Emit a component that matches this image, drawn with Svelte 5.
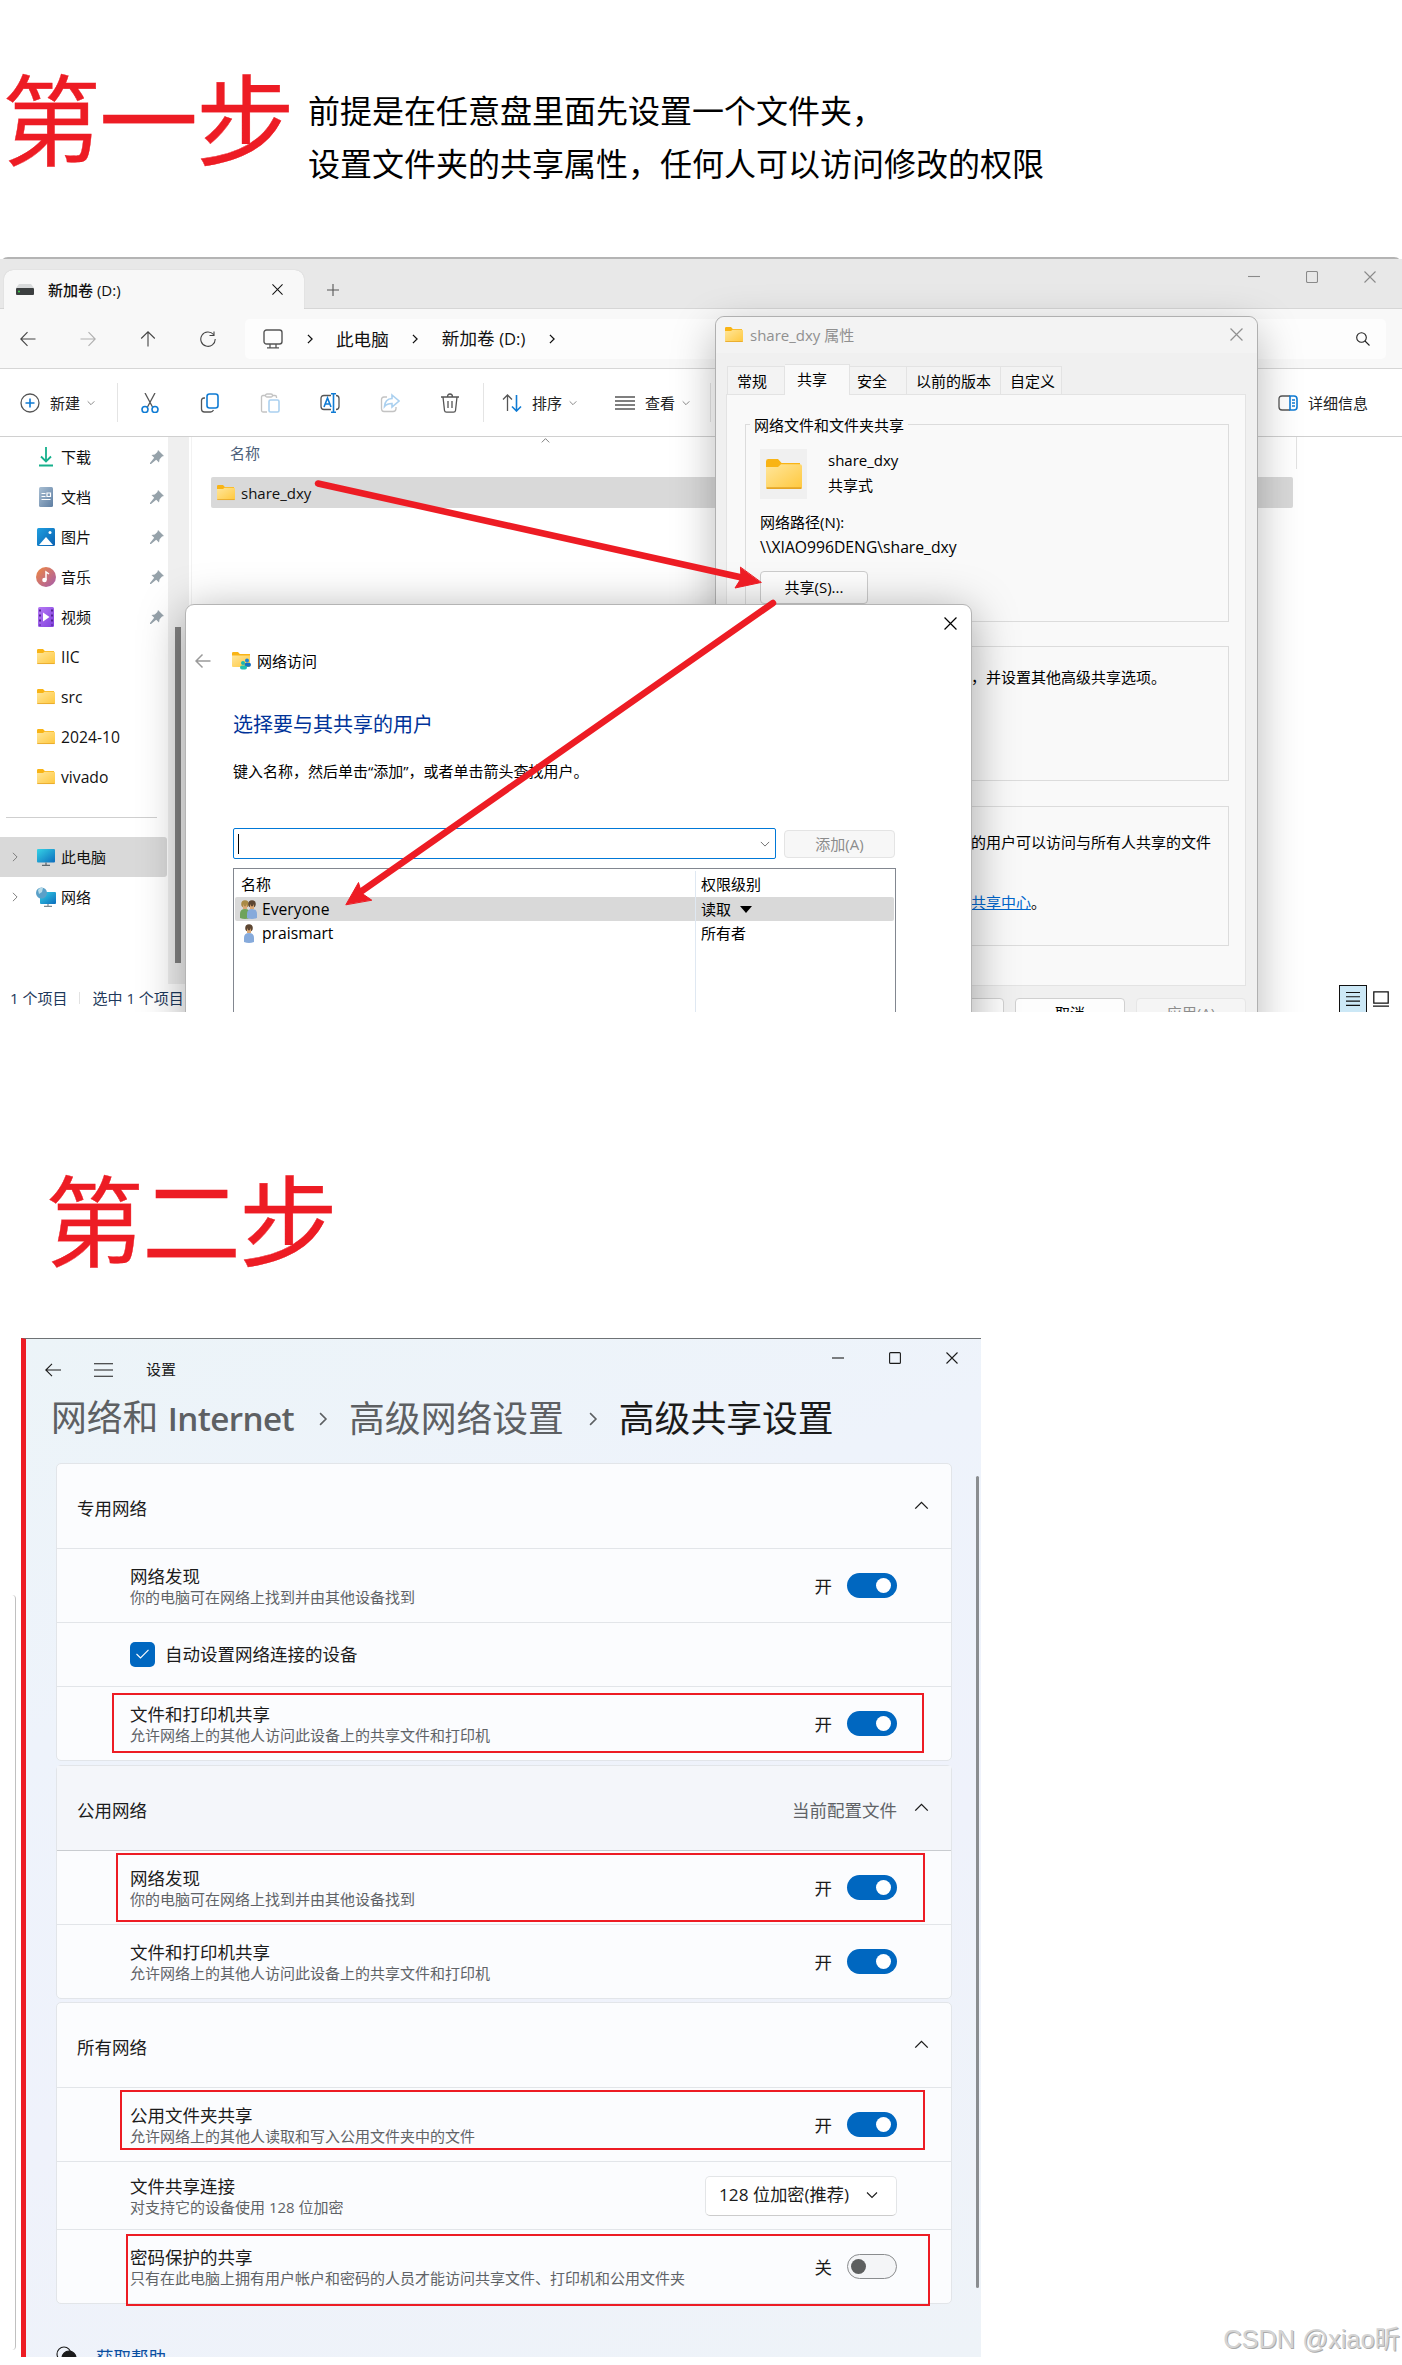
<script lang="ts">
  const quickAccess = [
    { icon: 'download', label: '下载', pinned: true },
    { icon: 'doc', label: '文档', pinned: true },
    { icon: 'picture', label: '图片', pinned: true },
    { icon: 'music', label: '音乐', pinned: true },
    { icon: 'video', label: '视频', pinned: true },
    { icon: 'folder', label: 'IIC', pinned: false },
    { icon: 'folder', label: 'src', pinned: false },
    { icon: 'folder', label: '2024-10', pinned: false },
    { icon: 'folder', label: 'vivado', pinned: false }
  ];

  const discovery = { title: '网络发现', sub: '你的电脑可在网络上找到并由其他设备找到', kind: 'on' };
  const printing = { title: '文件和打印机共享', sub: '允许网络上的其他人访问此设备上的共享文件和打印机', kind: 'on' };

  const sections = [
    {
      name: '专用网络',
      note: '',
      rows: [discovery, { title: '自动设置网络连接的设备', sub: '', kind: 'check' }, { ...printing, mark: 'm1' }]
    },
    {
      name: '公用网络',
      note: '当前配置文件',
      rows: [{ ...discovery, mark: 'm2' }, printing]
    },
    {
      name: '所有网络',
      note: '',
      rows: [
        { title: '公用文件夹共享', sub: '允许网络上的其他人读取和写入公用文件夹中的文件', kind: 'on', mark: 'm3' },
        { title: '文件共享连接', sub: '对支持它的设备使用 128 位加密', kind: 'select' },
        { title: '密码保护的共享', sub: '只有在此电脑上拥有用户帐户和密码的人员才能访问共享文件、打印机和公用文件夹', kind: 'off', mark: 'm4' }
      ]
    }
  ] as { name: string; note: string; rows: { title: string; sub: string; kind: string; mark?: string }[] }[];
</script>

<svelte:head>
  <title>共享设置</title>
</svelte:head>

{#snippet close(size: number)}
  <svg width={size} height={size} viewBox="0 0 12 12"><path d="M.5.5l11 11M11.5.5l-11 11" /></svg>
{/snippet}

{#snippet chevron(dir: string, w: number)}
  <svg class="chev {dir}" width={w} height={w} viewBox="0 0 12 12"><path d="M1 3.5l5 5 5-5" /></svg>
{/snippet}

{#snippet folder(w: number)}
  <svg class="solid" width={w} height={w * 0.84} viewBox="0 0 18 15">
    <path d="M0 1.2Q0 0 1.2 0H6l1.8 2H17v5H0z" fill="#f9b415" />
    <path d="M0 4h6l1.5-1.4H17q1 0 1 1V14q0 1-1 1H1q-1 0-1-1z" fill="url(#fold)" />
    <path d="M.3 14.5h17.4" stroke="#e5a526" stroke-width=".8" />
  </svg>
{/snippet}

{#snippet icon(name: string)}
  {#if name === 'folder'}
    {@render folder(18)}
  {:else if name === 'download'}
    <svg class="green" width="18" height="20" viewBox="0 0 18 20"><path d="M9 0v14M4 9.5l5 5 5-5M2 18.5h14" /></svg>
  {:else if name === 'doc'}
    <svg class="solid" width="18" height="20" viewBox="0 0 18 20">
      <rect x="2" width="14" height="20" rx="1.5" fill="url(#docg)" />
      <path d="M4.5 6.5h4M4.5 9.5h4M4.5 12.5h9M10 6h3.5v3.5H10z" stroke="#fff" stroke-width="1.2" />
    </svg>
  {:else if name === 'picture'}
    <svg class="solid" width="18" height="18" viewBox="0 0 18 18">
      <rect width="18" height="18" rx="1.5" fill="url(#blue)" />
      <path d="M2 17l7-8 7 8z" fill="#fff" /><circle cx="13" cy="4.5" r="1.5" fill="#fff" />
    </svg>
  {:else if name === 'music'}
    <svg class="solid" width="20" height="20" viewBox="0 0 20 20">
      <circle cx="10" cy="10" r="10" fill="url(#mus)" />
      <circle cx="8.5" cy="13" r="2.3" fill="#fff" /><path d="M10 13V5l3 2" stroke="#fff" stroke-width="1.5" />
    </svg>
  {:else if name === 'video'}
    <svg class="solid" width="18" height="20" viewBox="0 0 18 20">
      <rect x="1" width="16" height="20" rx="1.5" fill="url(#vid)" />
      <path d="M3 2.5v16M15 2.5v16" stroke="#4c1f8a" stroke-width="1.8" stroke-dasharray="2 3" />
      <path d="M6 5.5l6.5 4.5L6 14.5z" fill="#fff" />
    </svg>
  {:else if name === 'pc'}
    <svg class="solid" width="18" height="17" viewBox="0 0 18 17">
      <rect width="18" height="13.5" rx="1" fill="url(#cyan)" />
      <path d="M9 13.5V16M5 16.3h8" stroke="#5d6870" stroke-width="1.3" />
    </svg>
  {:else if name === 'net'}
    <svg class="solid" width="20" height="20" viewBox="0 0 20 20">
      <rect x="4" y="5" width="16" height="12" rx="1" fill="url(#cyan)" />
      <path d="M12 17v2M8 19.3h8" stroke="#7b8991" stroke-width="1.2" />
      <circle cx="5.5" cy="6" r="5.5" fill="#5aa0c8" /><path d="M2 3q2-3 5-2l-1 4-3 2z" fill="#b8dbe8" />
    </svg>
  {/if}
{/snippet}

{#snippet person(x: number, hair: string, body: string)}
  <circle cx={x} cy="5" r="3.8" fill={hair} />
  <path d="M{x - 2} 5q2 5 4 0v5h-4z" fill="#dba875" />
  <path d="M{x - 5} 19v-4q0-5 5-5t5 5v4q-5 2-10 0z" fill={body} />
{/snippet}

<svg class="defs" width="0" height="0">
  <defs>
    <linearGradient id="fold" x2="1" y2="1"><stop stop-color="#ffe69b" /><stop offset="1" stop-color="#ffc83d" /></linearGradient>
    <linearGradient id="docg" x2="1" y2="1"><stop stop-color="#a9bfd3" /><stop offset="1" stop-color="#5e7ea2" /></linearGradient>
    <linearGradient id="blue" x2="1" y2="1"><stop stop-color="#1f9fe0" /><stop offset="1" stop-color="#0a5fb0" /></linearGradient>
    <linearGradient id="mus" x2="1" y2="1"><stop stop-color="#f0883e" /><stop offset="1" stop-color="#a55cae" /></linearGradient>
    <linearGradient id="vid" x2="1" y2="1"><stop stop-color="#b679f5" /><stop offset="1" stop-color="#8040dd" /></linearGradient>
    <linearGradient id="cyan" x2="1" y2="1"><stop stop-color="#35d3e6" /><stop offset="1" stop-color="#0c6cbd" /></linearGradient>
  </defs>
</svg>

<main class="page">
  <header class="step first">
    <h1>第一步</h1>
    <p>前提是在任意盘里面先设置一个文件夹，<br />设置文件夹的共享属性，任何人可以访问修改的权限</p>
  </header>

  <section class="desktop">
    <div class="explorer">
      <div class="titlebar">
        <div class="tab">
          <svg class="solid" width="18" height="11" viewBox="0 0 18 11">
            <path d="M3 0h12l3 4H0z" fill="#d8dadb" /><rect y="4" width="18" height="7" rx="1" fill="#3c3f40" />
            <circle cx="3" cy="7.5" r="1" fill="#3ddc4c" />
          </svg>
          <span>新加卷 (D:)</span>
          {@render close(11)}
        </div>
        <svg class="plus" width="12" height="12" viewBox="0 0 12 12"><path d="M6 0v12M0 6h12" /></svg>
        <div class="controls">
          <svg width="12" height="12" viewBox="0 0 12 12"><path d="M0 5.5h12" /></svg>
          <svg width="12" height="12" viewBox="0 0 12 12"><rect x=".5" y=".5" width="11" height="11" rx="1.3" /></svg>
          {@render close(12)}
        </div>
      </div>

      <div class="navbar">
        <div class="navs">
          <svg width="16" height="16" viewBox="0 0 16 16"><path d="M15.5 8H1M7.5 1.2L.8 8l6.7 6.8" /></svg>
          <svg class="dim" width="16" height="16" viewBox="0 0 16 16"><path d="M.5 8H15M8.5 1.2L15.2 8l-6.7 6.8" /></svg>
          <svg width="16" height="16" viewBox="0 0 16 16"><path d="M8 15.5V1M1.2 7.5L8 .8l6.8 6.7" /></svg>
          <svg width="16" height="16" viewBox="0 0 16 16"><path d="M13.5 3.5A7.2 7.2 0 1 0 15.2 8M14 .5v4H9.5" /></svg>
        </div>
        <div class="address">
          <svg width="20" height="20" viewBox="0 0 20 20"><rect x="1" y="1" width="18" height="14" rx="2.5" stroke-width="1.4" /><path d="M7 15v3.5M13 15v3.5M4 18.8h12" stroke-width="1.3" /></svg>
          <span class="sep">{@render chevron('right', 10)}</span>
          <span>此电脑</span>
          <span class="sep">{@render chevron('right', 10)}</span>
          <span>新加卷 <small>(D:)</small></span>
          <span class="sep">{@render chevron('right', 10)}</span>
          <svg class="search" width="14" height="14" viewBox="0 0 14 14"><circle cx="5.5" cy="5.5" r="4.8" /><path d="M9 9l4.5 4.5" /></svg>
        </div>
      </div>

      <div class="toolbar">
        <div class="tool new">
          <svg width="20" height="20" viewBox="0 0 20 20"><circle cx="10" cy="10" r="9" /><path class="b" d="M10 5.5v9M5.5 10h9" /></svg>
          <span>新建</span>{@render chevron('down', 8)}
        </div>
        <i class="bar"></i>
        <div class="acts">
          <svg width="20" height="20" viewBox="0 0 20 20"><path d="M5 0l7.5 14M15 0L7.5 14" /><circle class="b" cx="5" cy="16.5" r="3" /><circle class="b" cx="15" cy="16.5" r="3" /></svg>
          <svg width="20" height="20" viewBox="0 0 20 20"><path d="M5 5H4Q1.5 5 1.5 7.5v8.500q0 3 3 3h6q2 0 3-2" /><rect class="b" x="7" y="1" width="11" height="14" rx="2.5" /></svg>
          <svg class="faint" width="20" height="20" viewBox="0 0 20 20"><path d="M6 2.5H3q-1.500 0-1.500 1.500v13.500q0 1.500 1.500 1.500h4M12 2.500h3q1.500 0 1.500 1.500v1" /><rect x="5.5" y="1" width="7" height="3" rx="1.5" /><rect class="b" x="9" y="7" width="10" height="12" rx="1.5" /></svg>
          <svg width="20" height="20" viewBox="0 0 20 20"><path d="M11 2.5H4q-3 0-3 3v8q0 3 3 3h7M16 2.5q3 0 3 3v8q0 3-3 3" /><path class="b" d="M4 14l3.500-9L11 14M5 11h5M11 .8h5M11 19.200h5M13.500 1v18" /></svg>
          <svg class="faint" width="20" height="20" viewBox="0 0 20 20"><path d="M7 4H4Q1.500 4 1.500 6.500v9Q1.500 18.500 4 18.500h9q3 0 3-3V14" /><path class="b" d="M12 2l7 6-7 6v-3.500q-5 0-7.500 3Q5 6 12 5.500z" /></svg>
          <svg width="20" height="20" viewBox="0 0 20 20"><path d="M1 4h18M3 4l1.500 13.500q.2 1.700 2 1.700h7q1.800 0 2-1.700L17 4M7.500 4q0-3 2.500-3t2.500 3M8 8v7M12 8v7" /></svg>
        </div>
        <i class="bar"></i>
        <div class="tool sort">
          <svg width="20" height="18" viewBox="0 0 20 18"><path d="M5.500 17V1M1 5.500L5.500 1 10 5.500" /><path class="b" d="M14.500 1v16M10 12.500l4.500 4.500 4.500-4.500" /></svg>
          <span>排序</span>{@render chevron('down', 8)}
        </div>
        <div class="tool view">
          <svg width="20" height="14" viewBox="0 0 20 14"><path d="M0 1h20M0 5h20M0 9h20M0 13h20" /></svg>
          <span>查看</span>{@render chevron('down', 8)}
        </div>
        <i class="bar"></i>
        <div class="tool details">
          <svg width="20" height="16" viewBox="0 0 20 16"><path d="M12 1H4Q1 1 1 4v8q0 3 3 3h8" /><path class="b" d="M12 1h4q3 0 3 3v8q0 3-3 3h-4zM14 5h3M14 8h3M14 11h3" /></svg>
          <span>详细信息</span>
        </div>
      </div>

      <div class="body">
        <aside>
          {#each quickAccess as item}
            <div class="side-item" class:latin={!item.pinned}>
              <span class="ico">{@render icon(item.icon)}</span>
              <span>{item.label}</span>
              {#if item.pinned}
                <svg class="pin" width="14" height="14" viewBox="0 0 14 14"><path d="M8 0l6 6-2 .6-2.400 2.600L9 12.500 6.200 9.800 1 14l-1 0 0-1 4.200-5.200L1.500 5l3.300-.6L7.400 2z" /></svg>
              {/if}
            </div>
          {/each}
          <hr />
          <div class="side-item selected">
            {@render chevron('right', 10)}
            <span class="ico">{@render icon('pc')}</span><span>此电脑</span>
          </div>
          <div class="side-item">
            {@render chevron('right', 10)}
            <span class="ico">{@render icon('net')}</span><span>网络</span>
          </div>
        </aside>
        <div class="trough"><div class="thumb"></div></div>
        <div class="files">
          <div class="file-head"><span>名称</span>{@render chevron('up', 9)}<i></i></div>
          <div class="file-row">{@render folder(18)}<span>share_dxy</span></div>
        </div>
      </div>

      <footer class="status">
        <span>1 个项目</span><i></i><span>选中 1 个项目</span>
        <div class="modes">
          <b><svg width="14" height="14" viewBox="0 0 14 14"><path d="M0 .5h14M0 4.800h14M0 9.100h14M0 13.400h14" /></svg></b>
          <svg width="16" height="16" viewBox="0 0 14 14"><path d="M.7.700h12.600v10H.7zM0 13.300h14" /></svg>
        </div>
      </footer>
    </div>

    <div class="props">
      <div class="props-title">{@render folder(18)}<span>share_dxy 属性</span>{@render close(13)}</div>
      <div class="tabs">
        <span>常规</span><span class="active">共享</span><span>安全</span><span>以前的版本</span><span>自定义</span>
      </div>
      <div class="panel">
        <div class="group g1">
          <div class="legend">网络文件和文件夹共享</div>
          <div class="share-info">
            <div class="thumbnail">{@render folder(36)}</div>
            <div class="names">share_dxy<br />共享式</div>
          </div>
          <div class="path">网络路径(N):<br /><span class="latin">\\XIAO996DENG\share_dxy</span></div>
          <button class="share-btn">共享(S)...</button>
        </div>
        <div class="group g2"><span>，并设置其他高级共享选项。</span></div>
        <div class="group g3">
          <span>的用户可以访问与所有人共享的文件</span>
          <span><a href="#center">共享中心</a>。</span>
        </div>
      </div>
      <div class="props-foot"><button></button><button>取消</button><button class="off">应用(A)</button></div>
    </div>

    <div class="access">
      <div class="access-close">{@render close(13)}</div>
      <div class="access-title">
        <svg class="back" width="16" height="16" viewBox="0 0 16 16"><path d="M15.500 8H1M7.500 1.500L1 8l6.500 6.500" /></svg>
        <svg class="solid" width="19" height="18" viewBox="0 0 19 18">
          <path d="M0 1.200Q0 0 1.200 0H6l1.800 2H18v5H0z" fill="#f9b415" /><path d="M0 3.500h18V14q0 1-1 1H1q-1 0-1-1z" fill="url(#fold)" />
          <circle cx="15" cy="8.500" r="2" fill="#1c86d8" /><circle cx="11" cy="11" r="2" fill="#19b8b0" />
          <rect x="12.500" y="10.800" width="6.500" height="4" rx="2" fill="#1270c4" /><rect x="8" y="13.500" width="7" height="4" rx="2" fill="#22c0b2" />
        </svg>
        <span>网络访问</span>
      </div>
      <h2>选择要与其共享的用户</h2>
      <p>键入名称，然后单击<q>添加</q>，或者单击箭头查找用户。</p>
      <div class="combo-row">
        <div class="combo"><i></i>{@render chevron('down', 10)}</div>
        <button class="off">添加(A)</button>
      </div>
      <div class="users">
        <div class="user head"><span>名称</span><span>权限级别</span></div>
        <div class="user sel">
          <span class="latin">
            <svg class="solid" width="20" height="20" viewBox="0 0 20 20">{@render person(6, '#a98a45', '#6fa35c')}{@render person(13, '#5d4632', '#86aadb')}</svg>
            Everyone
          </span>
          <span>读取 <em></em></span>
        </div>
        <div class="user">
          <span class="latin">
            <svg class="solid" width="20" height="20" viewBox="0 0 20 20">{@render person(10, '#5d4632', '#86aadb')}</svg>
            praismart
          </span>
          <span>所有者</span>
        </div>
        <div class="rest"></div>
      </div>
    </div>

    <svg class="arrows" width="1402" height="755" viewBox="0 257 1402 755">
      <path d="M318 483.500L744 578M773 603L359 893" />
      <path class="tip" d="M761 582.500L735 588l6-9.500-.500-11zM346 904.500l12.500-22 3 10.500 10 7z" />
    </svg>
  </section>

  <header class="step second"><h1>第二步</h1></header>

  <section class="settings-wrap">
    <div class="sliver"></div>
    <div class="settings">
      <div class="set-top">
        <svg width="16" height="14" viewBox="0 0 16 14"><path d="M16 7H1M7 .8L.8 7 7 13.200" /></svg>
        <svg width="19" height="14" viewBox="0 0 19 14"><path d="M0 .8h19M0 7h19M0 13.200h19" /></svg>
        <span>设置</span>
        <div class="set-controls">
          <svg width="12" height="12" viewBox="0 0 12 12"><path d="M0 6h12" /></svg>
          <svg width="12" height="12" viewBox="0 0 12 12"><rect x=".6" y=".6" width="10.800" height="10.800" rx="1" /></svg>
          {@render close(12)}
        </div>
      </div>
      <nav class="crumbs">
        <span>网络和 <b>Internet</b></span>
        {@render chevron('right', 14)}
        <span>高级网络设置</span>
        {@render chevron('right', 14)}
        <span class="here">高级共享设置</span>
      </nav>

      {#each sections as section}
        <div class="card" class:current={section.note}>
          <div class="card-head"><span>{section.name}</span><em>{section.note}</em>{@render chevron('up', 15)}</div>
          {#each section.rows as row}
            <div class="row {row.kind}">
              {#if row.kind === 'check'}
                <span class="checkbox"><svg width="13" height="10" viewBox="0 0 13 10"><path d="M.5 5l4 4L12.500.8" /></svg></span>
              {/if}
              <div class="label">
                <div>{row.title}</div>
                {#if row.sub}<small>{row.sub}</small>{/if}
              </div>
              {#if row.kind === 'select'}
                <div class="select"><span>128 位加密(推荐)</span>{@render chevron('down', 12)}</div>
              {:else if row.kind !== 'check'}
                <span class="state">{row.kind === 'on' ? '开' : '关'}</span>
                <span class="toggle"><i></i></span>
              {/if}
              {#if row.mark}<div class="mark {row.mark}"></div>{/if}
            </div>
          {/each}
        </div>
      {/each}

      <div class="help">
        <svg width="24" height="24" viewBox="0 0 24 24"><circle cx="8" cy="8" r="7" /><circle class="dot" cx="13" cy="12" r="7" /></svg>
        <a href="#help">获取帮助</a>
      </div>
      <div class="scroll"></div>
    </div>
  </section>

  <div class="watermark">CSDN @xiao昕</div>
</main>

<style>
  :global(body) {
    margin: 0;
    background: #fff;
  }

  .page {
    position: relative;
    width: 1402px;
    height: 2365px;
    overflow: hidden;
    font: 15px/20px 'Open Sans', 'Noto Sans CJK SC', sans-serif;
    color: #111;
  }

  .page *,
  .page {
    box-sizing: border-box;
  }

  .defs { position: absolute; }
  svg { display: block; flex: none; fill: none; stroke: currentColor; stroke-width: 1.1; }
  svg.solid { stroke: none; }
  .chev.right { transform: rotate(-90deg); }
  .chev.up { transform: rotate(180deg); }
  button { font: inherit; color: inherit; padding: 0; }
  button.off { color: #8c8c8c; }
  span { white-space: nowrap; }
  .latin { font-size: 15.7px; }

  /* step captions */
  .step { display: flex; }
  .step h1 {
    margin: 0;
    font: 400 99px/100px 'Noto Sans CJK SC', sans-serif;
    letter-spacing: -2px;
    -webkit-text-stroke: 0.4px #ed1c24;
    color: #ed1c24;
    white-space: nowrap;
  }
  .first { height: 257px; padding: 65px 0 0 2px; }
  .first p { margin: 18px 0 0 15px; font-size: 32px; line-height: 53px; color: #000; white-space: nowrap; font-family: 'Noto Sans CJK SC', sans-serif; }
  .second { height: 326px; padding: 154px 0 0 45px; }

  /* explorer */
  .desktop { position: relative; height: 755px; overflow: hidden; }
  .explorer { height: 755px; display: flex; flex-direction: column; border-top: 2px solid #b4b4b4; border-radius: 8px 8px 0 0; }
  .explorer > div { flex: none; }
  .titlebar { height: 50px; display: flex; align-items: flex-end; background: #e8e8e8; border-bottom: 1px solid #d6d6d6; }
  .tab {
    width: 300px; height: 39px; margin: 0 0 -1px 4px; padding: 0 21px 0 12px;
    display: flex; align-items: center; background: #f8f8f8; border-radius: 9px 9px 0 0; font-weight: 500;
    box-shadow: 0 0 1px #bbb;
  }
  .tab span { margin: 0 auto 0 14px; }
  .plus { margin: 0 0 12px 23px; color: #555; }
  .controls { display: flex; gap: 46px; margin: 0 26px 25px auto; color: #8a8a8a; }
  .navbar { height: 60px; display: flex; align-items: center; padding-left: 20px; background: #f8f8f8; border-bottom: 1px solid #d6d6d6; }
  .navs { display: flex; gap: 44px; width: 225px; color: #444; }
  .navs .dim { color: #b0b0b0; }
  .address { width: 1141px; height: 40px; padding: 0 16px 0 18px; display: flex; align-items: center; background: #fdfdfd; border-radius: 5px; font-size: 17.6px; }
  .address small { font-size: 16.6px; }
  .address > svg { color: #555; }
  .address .sep { width: 53px; display: flex; justify-content: center; }
  .address .sep svg { stroke-width: 1.5; }
  .address .search { margin-left: auto; color: #222; }
  .toolbar { height: 68px; display: flex; align-items: center; padding: 0 34px 0 20px; border-bottom: 1px solid #d0d0d0; color: #222; }
  .toolbar svg { color: #555; stroke-width: 1.3; }
  .toolbar .b { stroke: #0f7bd4; stroke-width: 1.6; }
  .toolbar .faint { opacity: 0.35; }
  .toolbar .bar { width: 1px; height: 39px; background: #e4e4e4; }
  .tool { display: flex; align-items: center; gap: 10px; }
  .tool.new { width: 97px; }
  .tool.new .chev, .tool.sort .chev, .tool.view .chev { margin-left: -3px; color: #777; }
  .acts { display: flex; gap: 40px; width: 365px; padding-left: 22px; }
  .tool.sort { width: 131px; padding-left: 18px; }
  .tool.view { width: 95px; }
  .tool.details { margin-left: auto; }

  .body { display: flex; height: 547px; }
  aside { width: 168px; }
  .side-item { height: 40px; display: flex; align-items: center; padding-left: 10px; }
  .side-item .ico { width: 20px; margin: 0 5px 0 26px; display: flex; justify-content: center; }
  .side-item .chev { color: #777; margin-right: -10px; }
  .side-item .green { color: #16b08c; stroke-width: 1.8; }
  .side-item.selected { width: 167px; background: #d9d9d9; border-radius: 0 3px 3px 0; }
  .pin { margin: 0 4px 0 auto; fill: #96a2aa; stroke: none; }
  aside hr { width: 151px; margin: 20px 0 19px 6px; border: 0; border-top: 1px solid #cfcfcf; }
  .trough { width: 21px; padding: 190px 0 0 7px; background: #efefef; }
  .thumb { width: 6px; height: 336px; background: #828282; }
  .files { flex: 1; margin-left: 2px; border-left: 1px solid #f2f2f2; }
  .file-head { height: 40px; display: flex; padding: 6px 105px 0 38px; color: #4c607a; }
  .file-head .chev { margin: -7px auto 0 281px; color: #666; }
  .file-head i { width: 1px; height: 32px; margin-top: -6px; background: #e2e2e2; }
  .file-row { width: 1082px; height: 31px; margin-left: 19px; padding: 1px 0 0 6px; display: flex; align-items: center; gap: 6px; background: #d9d9d9; border-radius: 2px; }
  .status { flex: 1; min-height: 0; display: flex; align-items: center; padding-left: 10px; color: #1e395b; }
  .status > i { width: 1px; height: 12px; margin: 0 12px; background: #e2e2e2; }
  .modes { margin: 1px 13px 0 auto; display: flex; align-items: center; gap: 6px; color: #111; }
  .modes b { width: 28px; height: 28px; display: grid; place-items: center; background: #cce8f6; border: 1px solid #111; }

  /* properties dialog */
  .props {
    position: absolute; left: 715px; top: 59px; width: 543px; height: 760px; padding: 0 11px 0 10px;
    background: #f0f0f0; border: 1px solid #b0b0b0; border-radius: 9px;
    box-shadow: 0 14px 44px rgba(0, 0, 0, 0.28); color: #000;
  }
  .props-title { height: 36px; margin: 0 -11px 0 -10px; padding: 0 14px 1px 9px; display: flex; align-items: center; background: #f3f3f3; border-radius: 9px 9px 0 0; color: #909090; }
  .props-title span { margin: 0 auto 0 7px; }
  .tabs { height: 41px; display: flex; align-items: flex-end; padding-left: 1px; }
  .tabs span { height: 28px; padding: 4px 0 0 9px; border: 1px solid #e3e3e3; border-width: 1px 1px 0 0; background: #f3f3f3; width: 57px; }
  .tabs span:first-child { border-left-width: 1px; width: 58px; }
  .tabs .active { width: 65px; height: 31px; padding-left: 12px; background: #f9f9f9; position: relative; top: 1px; }
  .tabs span:nth-child(3) { padding-left: 7px; }
  .tabs span:nth-child(4) { width: 94px; }
  .tabs span:nth-child(5) { width: 61px; }
  .panel { height: 592px; padding: 29px 16px 0 18px; background: #f9f9f9; border: 1px solid #e3e3e3; }
  .group { border: 1px solid #dcdcdc; }
  .g1 { height: 198px; padding-left: 14px; }
  .legend { width: max-content; margin: -11px 0 0 -10px; padding: 0 4px; line-height: 22px; background: #f9f9f9; }
  .share-info { display: flex; gap: 21px; margin-top: 13px; line-height: 25px; }
  .names { margin-top: -1px; }
  .thumbnail { width: 47px; height: 50px; display: grid; place-items: center; background: #f0f0f0; }
  .path { margin-top: 11px; line-height: 25px; }
  .share-btn { display: block; width: 108px; height: 33px; margin-top: 11px; padding-bottom: 2px; border: 1px solid #ccc; border-radius: 4px; background: #fdfdfd; }
  .g2 { height: 135px; margin-top: 24px; padding: 20px 0 0 225px; }
  .g3 { height: 140px; margin-top: 25px; padding: 25px 0 0 225px; display: flex; flex-direction: column; gap: 40px; }
  .props a { color: #0066cc; }
  .props-foot { display: flex; justify-content: flex-end; gap: 11px; margin-top: 12px; }
  .props-foot button { width: 110px; height: 33px; padding-bottom: 4px; border: 1px solid #d0d0d0; border-radius: 4px; background: #fdfdfd; }
  .props-foot .off { border-color: #e6e6e6; background: #f5f5f5; }

  /* sharing wizard */
  .access {
    position: absolute; left: 185px; top: 347px; width: 787px; height: 480px; padding-left: 47px;
    background: #fff; border: 1px solid #b4b4b4; border-radius: 9px; box-shadow: 0 8px 46px rgba(0, 0, 0, 0.35); color: #000;
  }
  .access-close { height: 36px; display: flex; justify-content: flex-end; padding: 12px 14px 0 0; }
  .access-title { height: 40px; display: flex; align-items: center; margin-left: -38px; }
  .access-title .back { color: #9a9a9a; margin-right: 21px; stroke-width: 1.5; }
  .access-title span { margin-left: 6px; }
  .access h2 { margin: 29px 0 0; font: 400 20px/28px 'Noto Sans CJK SC', sans-serif; color: #003399; }
  .access p { margin: 23px 0 0; line-height: 20px; }
  q::before { content: '“'; }
  q::after { content: '”'; }
  .combo-row { display: flex; align-items: center; gap: 8px; margin-top: 47px; }
  .combo { width: 543px; height: 31px; padding: 0 5px 0 4px; display: flex; align-items: center; justify-content: space-between; border: 1px solid #0078d7; border-radius: 2px; color: #666; }
  .combo i { width: 1px; height: 20px; background: #000; }
  .combo-row button { width: 111px; height: 28px; border: 1px solid #e4e4e4; border-radius: 4px; background: #f7f7f7; }
  .users { width: 663px; margin-top: 9px; border: 1px solid #828790; padding: 1px 1px 0; }
  .user { height: 24px; display: flex; align-items: center; }
  .user.head { height: 27px; padding-top: 1px; }
  .user.head span:first-child { padding-left: 6px; }
  .user.sel { background: #d9d9d9; border-radius: 2px; }
  .user span { width: 461px; height: 100%; display: flex; align-items: center; gap: 3px; padding-left: 4px; border-right: 1px solid #dfe8f2; }
  .user span + span { width: auto; padding-left: 5px; border: 0; }
  .user em { margin-left: 6px; border: 6px solid transparent; border-top: 7px solid #000; border-bottom: 0; }
  .rest { width: 461px; height: 100px; border-right: 1px solid #dfe8f2; }

  .arrows { position: absolute; left: 0; top: 0; stroke: #ed1c24; stroke-width: 6.5; stroke-linecap: round; }
  .arrows .tip { fill: #ed1c24; stroke-width: 1; }

  /* settings window */
  .settings-wrap { display: flex; height: 1019px; }
  .sliver { width: 5px; height: 755px; margin: 257px 5px 0 11px; border: 1px solid #c0c0c0; border-width: 0 1px 0 0; border-radius: 0 4px 4px 0; }
  .settings {
    position: relative; width: 960px; padding: 0 29px 0 30px; overflow: hidden;
    border-top: 1px solid #6e7275; border-left: 5px solid #ed1c24;
    background: linear-gradient(160deg, #ecf4f8, #eef3fb 30%, #eff2fb 60%, #eef3f8); color: #1b1b1b; font-size: 17.5px;
  }
  .set-top { display: flex; align-items: center; height: 59px; margin-left: -11px; font-size: 15px; }
  .set-top > svg { margin-right: 33px; margin-top: 3px; }
  .set-controls { display: flex; gap: 45px; margin: -22px -6px 0 auto; }
  .crumbs { display: flex; align-items: center; height: 40px; margin: 0 0 25px -5px; font-size: 35.8px; line-height: 40px; color: #5d6063; }
  .crumbs b { font-weight: 600; font-size: 33.2px; letter-spacing: -0.6px; }
  .crumbs .chev { margin: 2px 20px 0 22px; stroke-width: 1.4; }
  .crumbs .chev + span { margin-left: -1px; }
  .crumbs .here { color: #1b1b1b; }
  .card { margin-bottom: 4px; border: 1px solid #e2e5e9; border-radius: 5px; background: #fbfcfe; }
  .card.current { margin-bottom: 3px; }
  .card-head { height: 84px; display: flex; align-items: center; padding: 4px 22px 0 20px; }
  .card-head em { margin: 0 17px 0 auto; font-style: normal; color: #606367; }
  .card-head .chev { margin-top: -5px; }
  .current .card-head { background: #f4f6fa; }
  .row { position: relative; height: 74px; display: flex; align-items: center; padding: 0 54px 0 73px; border-top: 1px solid #e2e5e9; }
  .current .row:nth-child(2) { border-color: #c9ccd0; }
  .row.check { height: 64px; padding: 0 0 1px 73px; }
  .row.select { height: 68px; }
  .label { margin: 0 auto 0 0; line-height: 22px; white-space: nowrap; }
  .label small { display: block; font-size: 15px; line-height: 20px; color: #606367; }
  .check .label { margin-top: -1px; }
  .checkbox { width: 25px; height: 25px; margin-right: 10px; display: grid; place-items: center; border-radius: 5px; background: #0067c0; color: #fff; }
  .state { margin: 0 15px 0 0; }
  .toggle { width: 50px; height: 25px; padding: 5px 6px; display: flex; justify-content: flex-end; border-radius: 13px; background: #0067c0; }
  .toggle i { width: 15px; height: 15px; border-radius: 50%; background: #fff; }
  .off .toggle { padding: 4px 3px; justify-content: flex-start; border: 1px solid #8a8c8e; background: #f4f5f7; }
  .off .toggle i { background: #5d5f5f; }
  .row .select { width: 192px; height: 40px; display: flex; align-items: center; justify-content: space-between; padding: 0 18px 1px 13px; border: 1px solid #e3e5e7; border-bottom-color: #ccc; border-radius: 5px; background: #fff; font-size: 17.2px; }
  .mark { position: absolute; border: 2px solid #ed1c24; }
  .m1 { left: 55px; top: 6px; width: 812px; height: 60px; }
  .m2 { left: 59px; top: 2px; width: 809px; height: 69px; }
  .m3 { left: 63px; top: 2px; width: 805px; height: 60px; }
  .m4 { left: 69px; top: 4px; width: 804px; height: 72px; }
  .help { display: flex; gap: 16px; margin: 42px 0 0 0; }
  .help a { margin-top: -1px; color: #0a4fa0; text-decoration: none; line-height: 24px; }
  .help .dot { fill: #1b1b1b; }
  .scroll { position: absolute; left: 950px; top: 137px; width: 3px; height: 812px; border-radius: 2px; background: #8a8d90; }

  .watermark {
    position: absolute; right: 2px; bottom: 9px; font: 25.4px/34px 'Liberation Sans', 'Noto Sans CJK SC', sans-serif;
    color: #d4d4d4; white-space: nowrap; text-shadow: 1px 1px 0 #aaa;
  }
</style>
